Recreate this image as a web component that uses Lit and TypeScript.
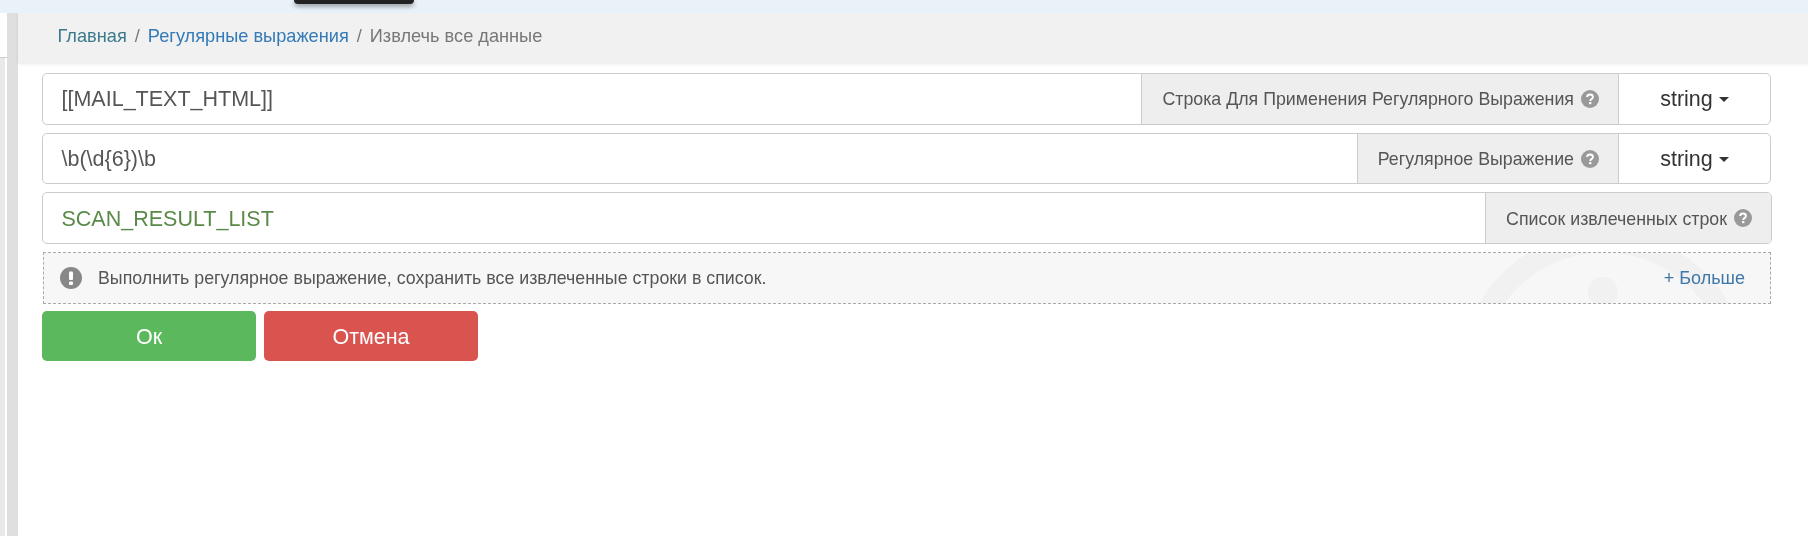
import { LitElement, html, css, svg } from "lit";
import { customElement } from "lit/decorators.js";

const helpIcon = html`<svg class="help" viewBox="0 0 16 16">
    <circle cx="8" cy="8" r="8" fill="#999"></circle>
    <path d="M5.400 6.200C5.500 4.700 6.600 4 8 4c1.500 0 2.600 .9 2.600 2.200 0 1.900-2.400 1.900-2.400 3.500" fill="none" stroke="#fff" stroke-width="1.700"></path>
    <rect x="7.200" y="10.700" width="2" height="1.900" fill="#fff"></rect>
</svg>`;

const watermark = svg`<circle cx="150" cy="150" r="134" fill="none" stroke="#f1f1f1" stroke-width="21"></circle>
    <circle cx="149" cy="66" r="15" fill="#f1f1f1"></circle>`;

@customElement("app-root")
export class AppRoot extends LitElement {
    static override styles = css`
        :host {
            display: block;
            height: 536px;
            overflow: hidden;
            background: #fff;
            font-family: "Liberation Sans", Arial, sans-serif;
            color: #555;
            /* the reference is an upscaled capture, everything is a bit soft */
            filter: blur(0.4px);
        }

        .topbar {
            position: relative;
            height: 13px;
            background: #e9f2f8;
        }
        .tooltip {
            position: absolute;
            left: 294px;
            top: 0;
            width: 120px;
            height: 4px;
            background: #222;
            border-radius: 0 0 5px 5px;
            box-shadow: 0 2px 5px rgba(0, 0, 0, 0.45);
        }

        .shell {
            display: flex;
            height: 523px;
        }
        .side-wrap {
            flex: none;
            width: 7px;
            background: linear-gradient(to right, #e9e9e9 5px, #fff 5px);
        }
        .side {
            height: 44px;
            border-bottom: 1px solid #ccc;
            background: #fff;
        }
        .scrollbar {
            flex: none;
            width: 11px;
            background: #dfdfdf;
        }
        .content {
            flex: 1;
            min-width: 0;
        }

        .breadcrumb {
            height: 50px;
            box-sizing: border-box;
            display: flex;
            align-items: center;
            gap: 8px;
            padding: 0 0 3px 39.500px;
            background: #f1f1f1;
            box-shadow: 0 1px 3px rgba(0, 0, 0, 0.1);
            font-size: 18.200px;
        }
        .breadcrumb a {
            color: #337ab7;
            text-decoration: none;
        }
        .breadcrumb .first {
            color: #3b7a8c;
        }
        .breadcrumb .sep,
        .breadcrumb .current {
            color: #777;
        }

        form {
            display: flex;
            flex-direction: column;
            padding: 10px 37px 0 24px;
        }

        .group {
            display: flex;
            height: 51.700px;
            margin-bottom: 8px;
            box-sizing: border-box;
            border: 1px solid #ccc;
            border-radius: 5px;
            background: #fff;
            overflow: hidden;
        }
        .group.wide {
            margin-right: -1px;
        }
        .value {
            flex: 1;
            min-width: 0;
            display: flex;
            align-items: center;
            padding: 2px 0 0 18.500px;
            font-size: 21.500px;
            color: #555;
        }
        .value.success {
            color: #5a8a4a;
        }
        .addon {
            display: flex;
            align-items: center;
            gap: 7px;
            padding: 2px 19px 0 20px;
            background: #eee;
            border-left: 1px solid #ccc;
            font-size: 17.800px;
            color: #555;
        }
        .help {
            width: 18px;
            height: 18px;
            flex: none;
            margin-top: -2px;
        }
        .type {
            flex: none;
            width: 151px;
            display: flex;
            align-items: center;
            justify-content: center;
            gap: 6px;
            padding-top: 2px;
            border-left: 1px solid #ccc;
            font-size: 21.500px;
            color: #333;
        }
        .caret {
            width: 0;
            height: 0;
            border-top: 5px solid #333;
            border-left: 5.500px solid transparent;
            border-right: 5.500px solid transparent;
        }

        .note {
            position: relative;
            height: 52px;
            box-sizing: border-box;
            display: flex;
            align-items: center;
            gap: 16px;
            padding: 0 25px 0 16px;
            margin: 0 0 7px 1px;
            border: 1px dashed #aaa;
            background: #f7f7f7;
            font-size: 17.800px;
            overflow: hidden;
        }
        .note-icon {
            width: 22px;
            height: 22px;
            flex: none;
        }
        .note-text {
            flex: 1;
            position: relative;
        }
        .more {
            position: relative;
            color: #3f77a8;
            font-size: 18px;
        }
        .mark {
            position: absolute;
            left: 1410px;
            top: -27px;
            width: 300px;
            height: 300px;
        }

        .actions {
            display: flex;
            gap: 8px;
        }
        .btn {
            width: 214px;
            height: 50px;
            box-sizing: border-box;
            padding-top: 2px;
            display: flex;
            align-items: center;
            justify-content: center;
            border-radius: 5px;
            font-size: 21.500px;
            color: #fff;
        }
        .ok {
            background: #5cb85c;
        }
        .cancel {
            background: #d9534f;
        }
    `;

    private renderGroup (value: string, label: string, typed: boolean) {
        return html`
            <div class="group ${typed ? "" : "wide"}">
                <div class="value ${typed ? "" : "success"}">${value}</div>
                <div class="addon">${label}${helpIcon}</div>
                ${typed ? html`<div class="type">string<span class="caret"></span></div>` : ""}
            </div>
        `;
    }

    override render () {
        return html`
            <div class="topbar"><div class="tooltip"></div></div>
            <div class="shell">
                <div class="side-wrap"><div class="side"></div></div>
                <div class="scrollbar"></div>
                <div class="content">
                    <nav class="breadcrumb">
                        <a class="first" href="#">Главная</a>
                        <span class="sep">/</span>
                        <a href="#">Регулярные выражения</a>
                        <span class="sep">/</span>
                        <span class="current">Извлечь все данные</span>
                    </nav>
                    <form>
                        ${this.renderGroup("[[MAIL_TEXT_HTML]]", "Строка Для Применения Регулярного Выражения", true)}
                        ${this.renderGroup("\\b(\\d{6})\\b", "Регулярное Выражение", true)}
                        ${this.renderGroup("SCAN_RESULT_LIST", "Список извлеченных строк", false)}
                        <div class="note">
                            <svg class="mark" viewBox="0 0 300 300">${watermark}</svg>
                            <svg class="note-icon" viewBox="0 0 22 22">
                                <circle cx="11" cy="11" r="11" fill="#888"></circle>
                                <rect x="9" y="4.500" width="4" height="8.500" rx="1" fill="#fff"></rect>
                                <rect x="9" y="14.500" width="4" height="3.500" rx="1" fill="#fff"></rect>
                            </svg>
                            <span class="note-text">Выполнить регулярное выражение, сохранить все извлеченные строки в список.</span>
                            <span class="more">+ Больше</span>
                        </div>
                        <div class="actions">
                            <div class="btn ok">Ок</div>
                            <div class="btn cancel">Отмена</div>
                        </div>
                    </form>
                </div>
            </div>
        `;
    }
}
